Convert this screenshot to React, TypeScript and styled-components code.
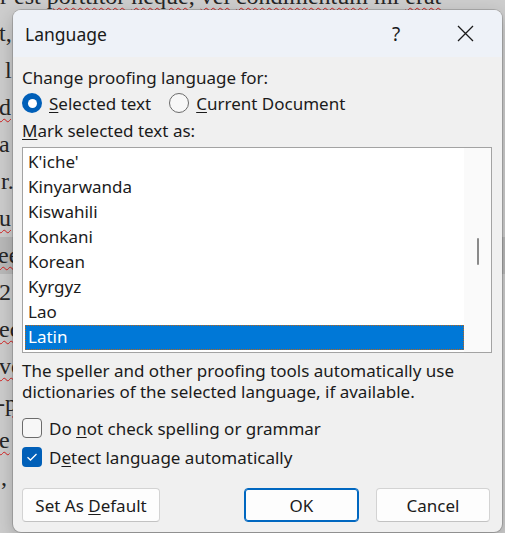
import React from "react";
import styled, { createGlobalStyle } from "styled-components";

const GlobalStyle = createGlobalStyle`
  html, body { margin: 0; padding: 0; }
  body { width: 505px; height: 533px; overflow: hidden; background: #cdcdcd; }
`;

const Page = styled.div`
  position: relative;
  width: 505px;
  height: 533px;
  overflow: hidden;
  background: #cdcdcd;
`;

const Doc = styled.div`
  display: flex;
  flex-direction: column;
  margin-top: -22px;
  font-family: "Liberation Serif", serif;
  font-size: 24px;
  line-height: 37px;
  color: #262626;
  white-space: nowrap;
`;

const DocLine = styled.div<{ $shift?: number; $hl?: boolean }>`
  height: 37px;
  margin-left: ${(p) => p.$shift ?? 0}px;
  background: ${(p) => (p.$hl ? "#b9b9b9" : "transparent")};
`;

const Typo = styled.span`
  text-decoration: underline wavy #d42020;
  text-decoration-thickness: 1px;
  text-underline-offset: 3px;
`;

const Dialog = styled.div`
  position: absolute;
  left: 13px;
  top: 10px;
  width: 489px;
  height: 522px;
  background: #f0f0f0;
  border-radius: 8px;
  overflow: hidden;
  box-shadow: 0 0 0 1px rgba(0, 0, 0, 0.16), 0 6px 18px rgba(0, 0, 0, 0.22);
  display: flex;
  flex-direction: column;
  font-family: "Noto Sans", sans-serif;
  color: #1b1b1b;
`;

const TitleBar = styled.div`
  height: 47px;
  flex: none;
  background: #eef2f8;
  display: flex;
  align-items: center;
  padding: 0 14px 0 12px;
`;

const Title = styled.div`
  font-size: 17.5px;
  color: #1a1a1a;
`;

const TitleButtons = styled.div`
  margin-left: auto;
  display: flex;
  gap: 23px;
`;

const TitleButton = styled.div`
  width: 46px;
  height: 47px;
  display: flex;
  align-items: center;
  justify-content: center;
  font-size: 19px;
  color: #1a1a1a;
`;

const Body = styled.div`
  display: flex;
  flex-direction: column;
  padding: 11px 10px 0 9px;
  font-size: 17px;
`;

const Label = styled.div<{ $mt?: number }>`
  line-height: 20px;
  margin-top: ${(p) => p.$mt ?? 0}px;
`;

const Key = styled.span`
  text-decoration: underline;
  text-underline-offset: 2px;
`;

const RadioRow = styled.div`
  display: flex;
  align-items: center;
  height: 22px;
  margin-top: 4px;
`;

const RadioItem = styled.label<{ $mr?: number }>`
  display: flex;
  align-items: center;
  gap: 7px;
  margin-right: ${(p) => p.$mr ?? 0}px;
`;

const Radio = styled.span<{ $on?: boolean }>`
  width: 20px;
  height: 20px;
  box-sizing: border-box;
  border-radius: 50%;
  display: flex;
  align-items: center;
  justify-content: center;
  background: ${(p) => (p.$on ? "#005fb8" : "#f7f7f7")};
  border: ${(p) => (p.$on ? "none" : "1px solid #6b6b6b")};
  &::after {
    content: "";
    display: ${(p) => (p.$on ? "block" : "none")};
    width: 9px;
    height: 9px;
    border-radius: 50%;
    background: #ffffff;
  }
`;

const ListBox = styled.div`
  margin-top: 6px;
  height: 206px;
  box-sizing: border-box;
  border: 1px solid #a3a3a3;
  background: #ffffff;
  display: flex;
`;

const Items = styled.div`
  flex: 1;
  display: flex;
  flex-direction: column;
  padding: 2px 0 0 2px;
`;

const Item = styled.div<{ $sel?: boolean }>`
  height: 25px;
  line-height: 24px;
  padding-left: 3px;
  box-sizing: border-box;
  background: ${(p) => (p.$sel ? "#0078d7" : "transparent")};
  color: ${(p) => (p.$sel ? "#ffffff" : "#1b1b1b")};
  outline: ${(p) => (p.$sel ? "1px dotted #b8671c" : "none")};
  outline-offset: -1px;
`;

const ScrollTrack = styled.div`
  width: 27px;
  background: #fafafa;
  display: flex;
  justify-content: center;
`;

const Thumb = styled.div`
  width: 2px;
  height: 27px;
  border-radius: 1px;
  background: #8a8a8a;
`;

const Desc = styled.div`
  margin-top: 7px;
  line-height: 21px;
`;

const CheckRow = styled.label<{ $mt: number }>`
  display: flex;
  align-items: center;
  gap: 7px;
  height: 22px;
  margin-top: ${(p) => p.$mt}px;
`;

const Box = styled.span<{ $on?: boolean }>`
  width: 20px;
  height: 20px;
  box-sizing: border-box;
  border-radius: 4px;
  display: flex;
  align-items: center;
  justify-content: center;
  background: ${(p) => (p.$on ? "#005fb8" : "#f7f7f7")};
  border: ${(p) => (p.$on ? "none" : "1px solid #6b6b6b")};
`;

const ButtonRow = styled.div`
  display: flex;
  margin-top: 20px;
  padding-right: 2px;
`;

const Button = styled.div<{ $w: number; $primary?: boolean; $ml?: number }>`
  width: ${(p) => p.$w}px;
  height: 34px;
  box-sizing: border-box;
  margin-left: ${(p) => p.$ml ?? 0}px;
  border-radius: 4px;
  background: #fdfdfd;
  border: 1px solid ${(p) => (p.$primary ? "#0067c0" : "#d3d3d3")};
  border-bottom-color: ${(p) => (p.$primary ? "#0067c0" : "#c2c2c2")};
  box-shadow: ${(p) => (p.$primary ? "inset 0 0 0 1px #0067c0" : "none")};
  display: flex;
  align-items: center;
  justify-content: center;
  font-size: 17px;
`;

const languages = ["K'iche'", "Kinyarwanda", "Kiswahili", "Konkani", "Korean", "Kyrgyz", "Lao", "Latin"];

export default function App() {
  return (
    <>
      <GlobalStyle />
      <Page>
        <Doc>
          <DocLine>
            r est <Typo>porttitor</Typo> <Typo>neque</Typo>, <Typo>vel</Typo> <Typo>condimentum</Typo> mi <Typo>erat</Typo>
          </DocLine>
          <DocLine $shift={-1}>t,</DocLine>
          <DocLine $shift={5}>l</DocLine>
          <DocLine $shift={-1}><Typo>d</Typo></DocLine>
          <DocLine $shift={-1}>a</DocLine>
          <DocLine $shift={1}>r.</DocLine>
          <DocLine $shift={-1}><Typo>u</Typo></DocLine>
          <DocLine $shift={-2} $hl><Typo>ee</Typo></DocLine>
          <DocLine $shift={-1}>2</DocLine>
          <DocLine $shift={-1}><Typo>ec</Typo></DocLine>
          <DocLine $shift={-1}><Typo>vo</Typo></DocLine>
          <DocLine $shift={-3}>-<Typo>p</Typo></DocLine>
          <DocLine $shift={-1}><Typo>e</Typo></DocLine>
          <DocLine $shift={1}>,</DocLine>
        </Doc>
        <Dialog>
          <TitleBar>
            <Title>Language</Title>
            <TitleButtons>
              <TitleButton>?</TitleButton>
              <TitleButton>
                <svg width="17" height="17" viewBox="0 0 17 17">
                  <path d="M1 1 L16 16 M16 1 L1 16" stroke="#1a1a1a" strokeWidth="1.3" fill="none" />
                </svg>
              </TitleButton>
            </TitleButtons>
          </TitleBar>
          <Body>
            <Label>Change proofing language for:</Label>
            <RadioRow>
              <RadioItem $mr={18}>
                <Radio $on />
                <span><Key>S</Key>elected text</span>
              </RadioItem>
              <RadioItem>
                <Radio />
                <span><Key>C</Key>urrent Document</span>
              </RadioItem>
            </RadioRow>
            <Label $mt={7}><Key>M</Key>ark selected text as:</Label>
            <ListBox>
              <Items>
                {languages.map((l) => (
                  <Item key={l} $sel={l === "Latin"}>{l}</Item>
                ))}
              </Items>
              <ScrollTrack>
                <Thumb style={{ marginTop: 90 }} />
              </ScrollTrack>
            </ListBox>
            <Desc>
              The speller and other proofing tools automatically use
              <br />
              dictionaries of the selected language, if available.
            </Desc>
            <CheckRow $mt={15}>
              <Box />
              <span>Do <Key>n</Key>ot check spelling or grammar</span>
            </CheckRow>
            <CheckRow $mt={7}>
              <Box $on>
                <svg width="12" height="10" viewBox="0 0 12 10">
                  <path d="M1.5 5.2 L4.5 8 L10.5 2" stroke="#ffffff" strokeWidth="1.3" fill="none" />
                </svg>
              </Box>
              <span>D<Key>e</Key>tect language automatically</span>
            </CheckRow>
            <ButtonRow>
              <Button $w={138}><span>Set As <Key>D</Key>efault</span></Button>
              <Button $w={115} $ml={84} $primary>OK</Button>
              <Button $w={114} $ml={17}>Cancel</Button>
            </ButtonRow>
          </Body>
        </Dialog>
      </Page>
    </>
  );
}
